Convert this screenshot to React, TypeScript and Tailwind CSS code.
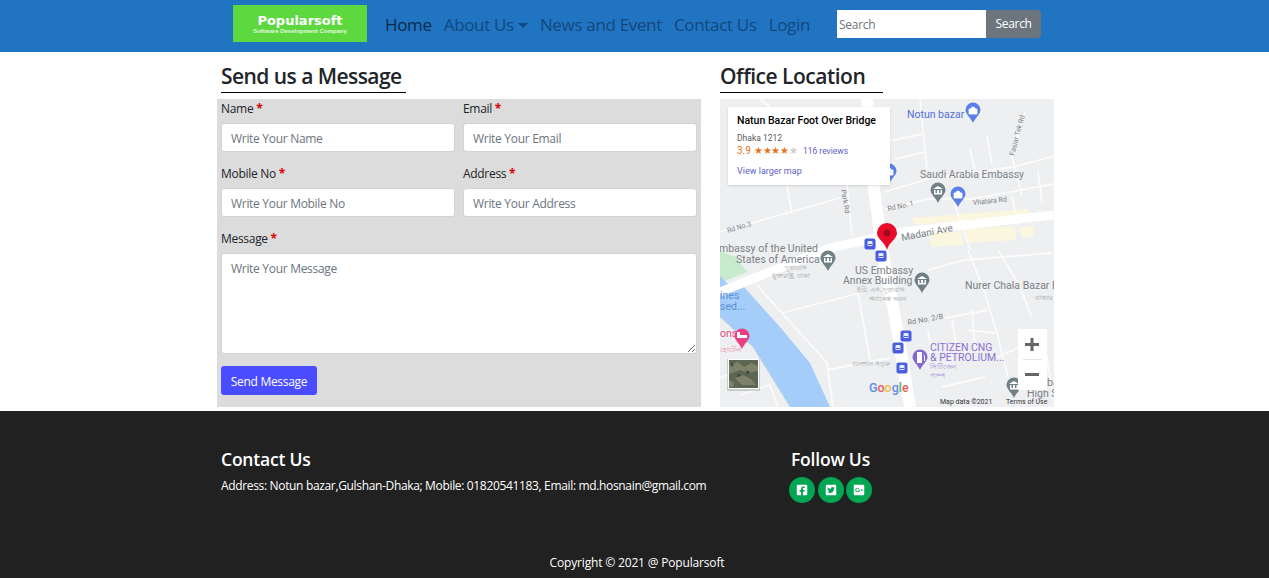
import React from 'react';
import { FaFacebookSquare, FaTwitterSquare, FaGooglePlusSquare } from 'react-icons/fa';

const font = { fontFamily: '"Open Sans", "Noto Sans", sans-serif' };

function Field({ label, placeholder }: { label: string; placeholder: string }) {
  return (
    <div>
      <label className="block h-[24px] text-[12px] leading-[19px] text-[#212529] tracking-[-0.3px]">
        {label} <span className="text-[#dd0000] font-bold">*</span>
      </label>
      <input
        placeholder={placeholder}
        className="w-full h-[29px] px-[9px] pt-[2px] bg-white border border-[#ced4da] rounded-[3px] text-[12px] tracking-[-0.3px] placeholder:text-[#6c757d] outline-none"
      />
    </div>
  );
}

function MapPin({ x, y, color, kind }: { x: number; y: number; color: string; kind?: 'bank' | 'bag' | 'fuel' | 'bed' }) {
  return (
    <g transform={`translate(${x} ${y})`}>
      <path d="M0 10C-2 5-7.500 1-7.500-3a7.500 7.500 0 0 1 15 0C7.500 1 2 5 0 10Z" fill={color} />
      {kind === 'bank' && <path d="M-4-3h1.500v3h1.500v-3h2v3h1.500v-3h1.500v4.500h-8zM-5-4l5-3 5 3z" fill="#fff" />}
      {kind === 'bag' && <path d="M-4-4h8v5h-8zM-2-4a2 2 0 0 1 4 0" fill="#fff" stroke="#fff" strokeWidth="0.8" />}
      {kind === 'fuel' && <path d="M-3-8h5v11h-5zM3-6l2 2v5h-1v-5z" fill="#fff" />}
      {kind === 'bed' && <path d="M-5-7h3v3h7v3h-10z" fill="#fff" />}
    </g>
  );
}

function BusStop({ x, y }: { x: number; y: number }) {
  return (
    <g transform={`translate(${x} ${y})`}>
      <rect x="-5.500" y="-5.500" width="11" height="11" rx="2" fill="#4a5fe0" />
      <rect x="-2.500" y="-3" width="5" height="5" rx="1" fill="#e8ecff" />
      <rect x="-2" y="0" width="4" height="1" fill="#4a5fe0" />
    </g>
  );
}

function MapDrawing() {
  const label = { fontFamily: 'Roboto, sans-serif' };
  return (
    <svg viewBox="720 99 334 308" className="absolute inset-0 w-full h-full" style={label}>
      <rect x="720" y="99" width="334" height="308" fill="#eeeff0" />
      {/* park, water */}
      <path d="M720 251L736 257L747 272L720 283Z" fill="#c9ebcd" />
      <path d="M720 276L728 284L720 288Z" fill="#a5cdf9" />
      <path d="M720 293L743 286L780 327L810 363L830 407H790L753 347L720 317Z" fill="#a5cdf9" />
      <path d="M720 317L753 347L790 407" fill="none" stroke="#b6dcc0" strokeWidth="1" strokeDasharray="2 2" />
      {/* yellow blocks */}
      <path d="M912 218L1028 209L1030 215L915 225ZM930 233L962 231L963 245L931 247ZM965 229L1015 226L1016 240L966 243ZM1020 227L1033 226L1034 236L1021 238Z" fill="#fbf6de" />
      {/* minor roads */}
      <g stroke="#fbfbfc" fill="none" strokeWidth="1.800">
        <path d="M920 99L927 169M885 142L922 134M895 159L925 152M885 192L928 179L1013 167L1054 156M987 136L992 164M970 149L975 171" />
        <path d="M1025 112L1012 156L1022 196M1038 171L1042 202M885 209L928 199L972 199L1054 184M953 199L970 249M1012 196L1018 225" />
        <path d="M720 232L840 198M787 185L792 214M847 185L852 235M760 99L770 107" />
        <path d="M757 285L827 363L833 407M782 313L860 293M827 370L890 358M858 293L870 360" />
        <path d="M928 270L965 260L1052 253M968 250L985 293L998 337L1008 377M998 250L1018 283L1032 317M945 318L988 310M968 330L995 333" />
        <path d="M952 320L957 350M972 310L975 350M928 330L932 352M942 387L985 377M998 357L1047 335M1044 340L1054 400" />
        <path d="M740 395L770 385L778 407M720 378L728 375" />
      </g>
      {/* main roads */}
      <path d="M720 292L757 277L830 248L902 232L1054 215" stroke="#fff" strokeWidth="9" fill="none" />
      <path d="M867 99L874 190L884 260L895 317L910 407" stroke="#fff" strokeWidth="12" fill="none" />
      <g fill="#7b8186">
        <text x="728" y="233" fontSize="7" transform="rotate(-17 728 233)">Rd No.3</text>
        <text x="888" y="211" fontSize="7" transform="rotate(-12 888 211)">Rd No. 1</text>
        <text x="973" y="205" fontSize="7" transform="rotate(-6 973 205)">Vhatara Rd</text>
        <text x="902" y="241" fontSize="10" transform="rotate(-11 902 241)">Madani Ave</text>
        <text x="920" y="178" fontSize="10.5">Saudi Arabia Embassy</text>
        <text x="841" y="190" fontSize="7" transform="rotate(80 841 190)">Park Rd</text>
        <text x="1014" y="156" fontSize="7" transform="rotate(-75 1014 156)">Fasiar Tek Rd</text>
        <text x="908" y="325" fontSize="7.5" transform="rotate(-10 908 325)">Rd No. 2/B</text>
        <text x="713" y="252" fontSize="10.5">Embassy of the United</text>
        <text x="736" y="263" fontSize="10.5">States of America</text>
        <text x="855" y="274" fontSize="10.5">US Embassy</text>
        <text x="843" y="284" fontSize="10.5">Annex Building</text>
        <text x="965" y="289" fontSize="10.5">Nurer Chala Bazar B</text>
        <text x="1047" y="386" fontSize="10.5">ba</text>
        <text x="1027" y="397" fontSize="10.5">High S</text>
      </g>
      <g fontSize="7" fill="#a0a5aa" style={{ fontFamily: '"Noto Sans", sans-serif' }}>
        <text x="785" y="270">দূতাবাস</text>
        <text x="772" y="278">যুক্তরাষ্ট্র, ঢাকা</text>
        <text x="857" y="292">ইউ. এস. দূতাবাস</text>
        <text x="869" y="301">অ্যানেক্স ভবন</text>
        <text x="852" y="366">গুলশান সড়ক</text>
        <text x="1035" y="300">বাজার</text>
      </g>
      <text x="907" y="118" fontSize="10.5" fill="#4f6fd8">Notun bazar</text>
      <text x="720" y="299" fontSize="10.5" fill="#5b8fd8">ines</text>
      <text x="720" y="310" fontSize="10.5" fill="#5b8fd8">sed...</text>
      <text x="720" y="337" fontSize="10.5" fill="#e84a86">ons</text>
      <text x="720" y="352" fontSize="7" fill="#ef7fa8" style={{ fontFamily: '"Noto Sans", sans-serif' }}>হোটেল</text>
      <text x="930" y="351" fontSize="10.5" fill="#8a6fd0">CITIZEN CNG</text>
      <text x="930" y="361" fontSize="10.5" fill="#8a6fd0">&amp; PETROLIUM...</text>
      <text x="930" y="369" fontSize="7" fill="#a08fdc" style={{ fontFamily: '"Noto Sans", sans-serif' }}>সিটিজেন</text>
      <text x="930" y="378" fontSize="7" fill="#a08fdc" style={{ fontFamily: '"Noto Sans", sans-serif' }}>পাম্প</text>
      <MapPin x={973} y={113} color="#5b7fe8" kind="bag" />
      <MapPin x={958} y={197} color="#5b7fe8" kind="bag" />
      <MapPin x={938} y={193} color="#6f8187" kind="bank" />
      <MapPin x={889} y={174} color="#5b7fe8" kind="bag" />
      <MapPin x={828} y={261} color="#6f8187" kind="bank" />
      <MapPin x={922} y={283} color="#6f8187" kind="bank" />
      <MapPin x={742} y={339} color="#ea3f80" kind="bed" />
      <MapPin x={920} y={360} color="#8268cf" kind="fuel" />
      <MapPin x={1014} y={388} color="#6f8187" kind="bank" />
      <BusStop x={870} y={244} />
      <BusStop x={881} y={256} />
      <BusStop x={906} y={336} />
      <BusStop x={898} y={348} />
      <BusStop x={902} y={368} />
      <path d="M887 250C885 242 877 239 877 233a10 10 0 0 1 20 0C897 239 889 242 887 250Z" fill="#ea0a2a" />
      <circle cx="887" cy="233" r="3.500" fill="#a00a1c" />
      {/* satellite thumbnail */}
      <rect x="727" y="359" width="33" height="32" fill="#000" opacity="0.15" />
      <rect x="728" y="359" width="31" height="30" fill="#fff" />
      <rect x="729" y="360" width="29" height="28" fill="#5d6653" />
      <path d="M729 365l9-3 6 5 7-4 7 3v5l-10 2-8-3-11 4zM735 378l8-3 8 4 5 6h-14zM729 380l5 2-1 5h-4z" fill="#7d8269" />
      <path d="M731 362l3 3-3 2zM746 370l4 2-3 3zM738 373l3 3-4 1z" fill="#3e4640" />
      {/* zoom control */}
      <rect x="1018" y="329" width="29" height="61" fill="#fff" />
      <path d="M1023 359.500h19" stroke="#e6e6e6" />
      <path d="M1025 344.500h14M1032 338v13M1025 374.500h14" stroke="#666" strokeWidth="3" />
      <text x="869" y="392" fontSize="12.500" fontWeight="500" fill="#5b8cee">G<tspan fill="#e8605a">o</tspan><tspan fill="#f2bd3c">o</tspan><tspan fill="#5b8cee">g</tspan><tspan fill="#5cb36c">l</tspan><tspan fill="#e8605a">e</tspan></text>
      <text x="940" y="404" fontSize="7" fill="#333">Map data ©2021</text>
      <text x="1006" y="404" fontSize="7" fill="#333">Terms of Use</text>
    </svg>
  );
}

export default function App() {
  return (
    <div className="min-h-[578px] bg-white flex flex-col" style={font}>
      <nav className="h-[52px] bg-[#2074c2] flex items-center">
        <div className="ml-[233px] mb-[5px] w-[134px] h-[37px] bg-[#5dd93f] flex flex-col items-center justify-center">
          <span className="text-[13px] leading-[15px] font-bold text-white" style={{ fontFamily: '"DejaVu Sans", sans-serif' }}>Popularsoft</span>
          <span className="text-[6px] leading-[7px] font-bold text-white/80" style={{ fontFamily: '"Liberation Sans", sans-serif' }}>Software Development Company</span>
        </div>
        <div className="ml-[18px] mb-[2px] flex items-center gap-[12px] text-[17px] tracking-[-0.33px] text-[#14487c]">
          <a className="text-[#0b2a4c]">Home</a>
          <a className="flex items-center">About Us<span className="ml-[4px] border-x-[5px] border-x-transparent border-t-[5px] border-t-[#14487c]" /></a>
          <a>News and Event</a>
          <a>Contact Us</a>
          <a>Login</a>
        </div>
        <form className="ml-[27px] mb-[4px] flex h-[28px]">
          <input placeholder="Search" className="w-[149px] h-full px-[2px] bg-white text-[12px] tracking-[-0.3px] placeholder:text-[#6c757d] outline-none" />
          <button type="button" className="w-[55px] h-full bg-[#6c757d] text-white text-[12px] tracking-[-0.3px] rounded-r-[3px]">Search</button>
        </form>
      </nav>

      <main className="ml-[217px] w-[837px] flex gap-[19px] h-[359px]">
        <section className="w-[484px]">
          <div className="pl-[4px] h-[47px] pt-[10px]">
            <h2 className="w-[185px] h-[31px] border-b border-black text-[21px] leading-[28px] font-semibold tracking-[-0.55px] text-[#212529]">Send us a Message</h2>
          </div>
          <div className="bg-[#dcdcdc] h-[308px] px-[4px] grid grid-cols-2 gap-x-[8px] content-start">
            <div className="mb-[12px]"><Field label="Name" placeholder="Write Your Name" /></div>
            <div className="mb-[12px]"><Field label="Email" placeholder="Write Your Email" /></div>
            <div className="mb-[12px]"><Field label="Mobile No" placeholder="Write Your Mobile No" /></div>
            <div className="mb-[12px]"><Field label="Address" placeholder="Write Your Address" /></div>
            <div className="col-span-2">
              <label className="block h-[24px] text-[12px] leading-[19px] text-[#212529] tracking-[-0.3px]">
                Message <span className="text-[#dd0000] font-bold">*</span>
              </label>
              <textarea
                placeholder="Write Your Message"
                className="block w-full h-[101px] px-[9px] py-[6px] bg-white border border-[#ced4da] rounded-[3px] text-[12px] tracking-[-0.3px] placeholder:text-[#6c757d] outline-none"
              />
            </div>
            <div className="col-span-2 mt-[12px]">
              <button type="button" className="w-[96px] h-[29px] pt-[2px] bg-[#4a4dff] text-white text-[12px] tracking-[-0.3px] rounded-[3px]">Send Message</button>
            </div>
          </div>
        </section>
        <section className="w-[334px]">
          <div className="h-[47px] pt-[10px]">
            <h2 className="w-[163px] h-[31px] border-b border-black text-[21px] leading-[28px] font-semibold tracking-[-0.5px] text-[#212529]">Office Location</h2>
          </div>
          <div className="relative h-[308px] overflow-hidden">
            <MapDrawing />
            <div className="absolute left-[8px] top-[8px] w-[162px] h-[78px] bg-white shadow-sm px-[9px] pt-[8px]" style={{ fontFamily: 'Roboto, sans-serif' }}>
              <div className="text-[10.5px] leading-[12px] font-medium text-black">Natun Bazar Foot Over Bridge</div>
              <div className="mt-[6px] text-[8.5px] leading-[10px] text-[#5b5b5b]">Dhaka 1212</div>
              <div className="mt-[2px] flex items-center text-[8.5px] leading-[12px]">
                <span className="text-[10px] text-[#e7711b]">3.9</span>
                <span className="ml-[3px] text-[#e7711b] text-[9.5px] tracking-[-0.2px]">★★★★<span className="text-[#ccc]">★</span></span>
                <span className="ml-[5px] text-[#5c5fc4]">116 reviews</span>
              </div>
              <div className="mt-[9px] text-[9px] leading-[10px] text-[#5c5fc4]">View larger map</div>
            </div>
          </div>
        </section>
      </main>

      <footer className="flex-1 h-[167px] bg-[#212121] text-white">
        <div className="ml-[221px] flex pt-[36px]">
          <div className="w-[570px]">
            <h3 className="text-[17.5px] leading-[24px] font-semibold tracking-[-0.2px]">Contact Us</h3>
            <p className="mt-[6px] text-[12px] leading-[18px] tracking-[-0.34px]">Address: Notun bazar,Gulshan-Dhaka; Mobile: 01820541183, Email: md.hosnain@gmail.com</p>
          </div>
          <div>
            <h3 className="text-[17.5px] leading-[24px] font-semibold tracking-[-0.2px]">Follow Us</h3>
            <div className="mt-[6px] -ml-[2px] flex gap-[2.5px]">
              {[FaFacebookSquare, FaTwitterSquare, FaGooglePlusSquare].map((Icon, i) => (
                <span key={i} className="w-[26px] h-[26px] rounded-full bg-[#00a651] flex items-center justify-center text-[12px] text-white">
                  <Icon />
                </span>
              ))}
            </div>
          </div>
        </div>
        <p className="mt-[51px] pl-[5px] text-center text-[12px] leading-[18px] tracking-[-0.17px]">Copyright © 2021 @ Popularsoft</p>
      </footer>
    </div>
  );
}
